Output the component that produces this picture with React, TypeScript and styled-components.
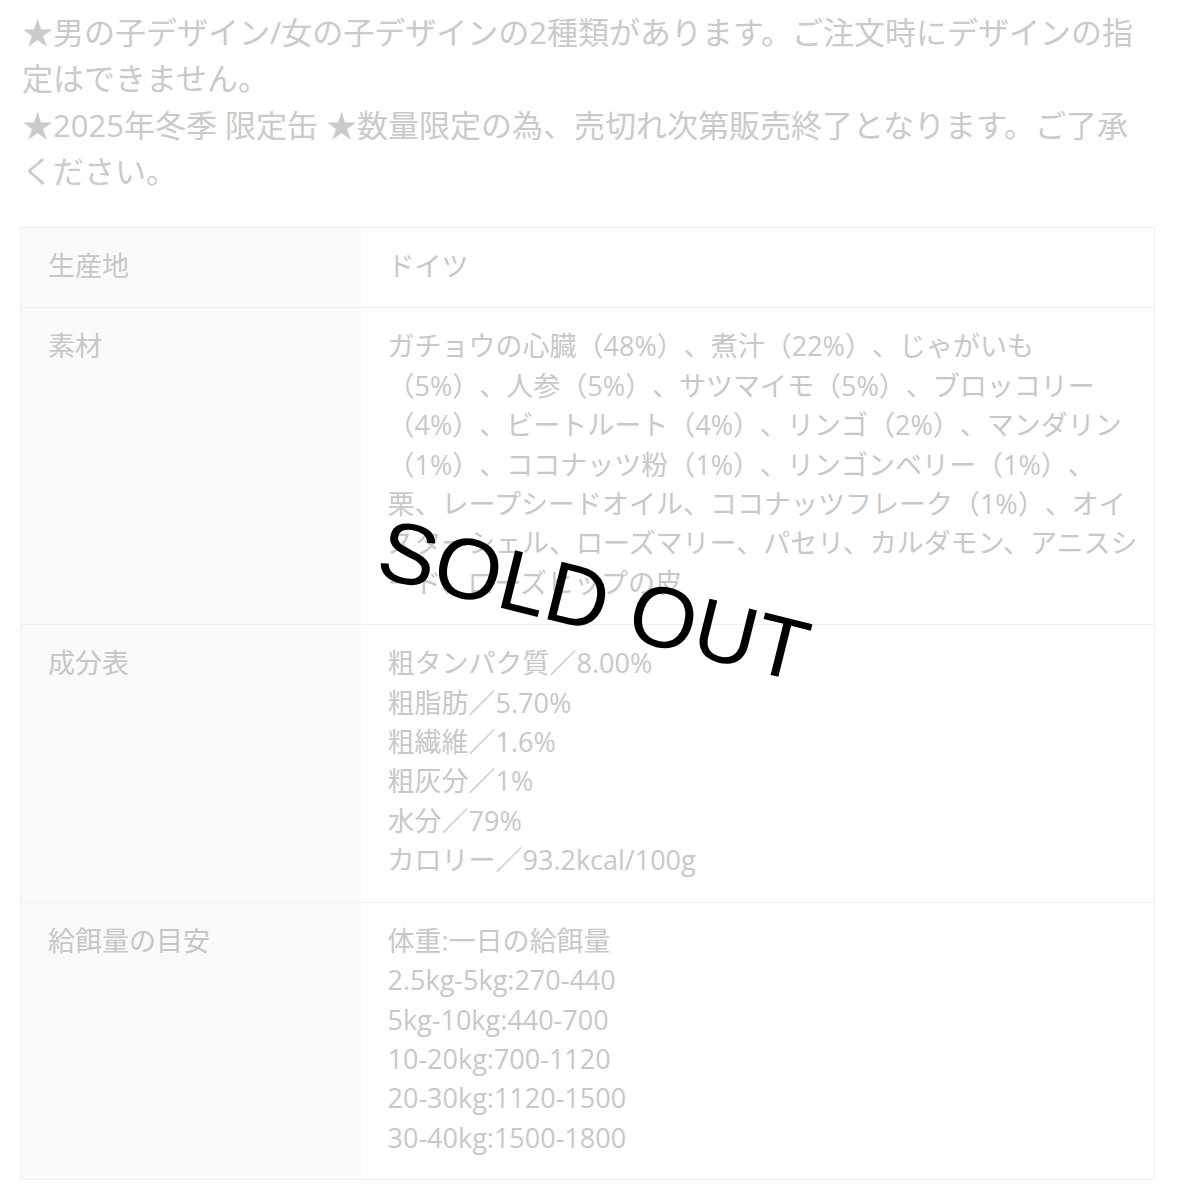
import React from "react";
import styled, { createGlobalStyle } from "styled-components";

const GlobalStyle = createGlobalStyle`
  *, *::before, *::after { box-sizing: border-box; }
  html, body { margin: 0; padding: 0; background: #ffffff; }
  body {
    font-family: "Open Sans", "Noto Sans CJK JP", sans-serif;
    font-weight: 400;
    color: #c8c8c8;
    text-spacing-trim: space-all;
  }
`;

const Page = styled.main`
  position: relative;
  width: 1200px;
  padding: 8px 45px 20px 20px;
`;

const Notice = styled.div`
  font-size: 31px;
  line-height: 46px;
  color: #cacaca;
  padding-left: 2px;
`;

const Line = styled.span`
  display: block;
  white-space: nowrap;
`;

const Star = styled.span`
  font-family: "Noto Sans CJK JP", sans-serif;
`;

const SpecTable = styled.table`
  width: 1135px;
  margin-top: 33px;
  border-collapse: collapse;
  table-layout: fixed;
  border: 1px solid #efefef;
  font-size: 27px;
  line-height: 39.4px;
`;

const Row = styled.tr`
  border-top: 1px solid #efefef;
`;

const Label = styled.th`
  width: 340px;
  padding: 18px 20px 22px 27px;
  background: #fafafa;
  text-align: left;
  vertical-align: top;
  font-weight: 400;
  color: #c6c6c6;
`;

const Value = styled.td`
  padding: 18px 20px 22px 27px;
  background: #ffffff;
  vertical-align: top;
  color: #c8c8c8;
`;

const SoldOut = styled.div`
  position: absolute;
  left: 594px;
  top: 600px;
  transform: translate(-50%, -50%) rotate(14deg);
  font-family: "Liberation Sans", Arial, sans-serif;
  font-weight: 400;
  font-size: 86px;
  line-height: 1;
  color: #000000;
  white-space: nowrap;
  pointer-events: none;
`;

const rows: { label: string; lines: string[] }[] = [
  { label: "生産地", lines: ["ドイツ"] },
  {
    label: "素材",
    lines: [
      "ガチョウの心臓（48%）、煮汁（22%）、じゃがいも",
      "（5%）、人参（5%）、サツマイモ（5%）、ブロッコリー",
      "（4%）、ビートルート（4%）、リンゴ（2%）、マンダリン",
      "（1%）、ココナッツ粉（1%）、リンゴンベリー（1%）、",
      "栗、レープシードオイル、ココナッツフレーク（1%）、オイ",
      "スターシェル、ローズマリー、パセリ、カルダモン、アニスシ",
      "ード、ローズヒップの皮",
    ],
  },
  {
    label: "成分表",
    lines: [
      "粗タンパク質／8.00%",
      "粗脂肪／5.70%",
      "粗繊維／1.6%",
      "粗灰分／1%",
      "水分／79%",
      "カロリー／93.2kcal/100g",
    ],
  },
  {
    label: "給餌量の目安",
    lines: [
      "体重:一日の給餌量",
      "2.5kg-5kg:270-440",
      "5kg-10kg:440-700",
      "10-20kg:700-1120",
      "20-30kg:1120-1500",
      "30-40kg:1500-1800",
    ],
  },
];

export default function App() {
  return (
    <>
      <GlobalStyle />
      <Page>
        <Notice>
          <Line>
            <Star>★</Star>男の子デザイン/女の子デザインの2種類があります。ご注文時にデザインの指
          </Line>
          <Line>定はできません。</Line>
          <Line>
            <Star>★</Star>2025年冬季 限定缶 <Star>★</Star>数量限定の為、売切れ次第販売終了となります。ご了承
          </Line>
          <Line>ください。</Line>
        </Notice>
        <SpecTable>
          <tbody>
            {rows.map((r) => (
              <Row key={r.label}>
                <Label>{r.label}</Label>
                <Value>
                  {r.lines.map((l, i) => (
                    <Line key={i}>{l}</Line>
                  ))}
                </Value>
              </Row>
            ))}
          </tbody>
        </SpecTable>
        <SoldOut>SOLD OUT</SoldOut>
      </Page>
    </>
  );
}
